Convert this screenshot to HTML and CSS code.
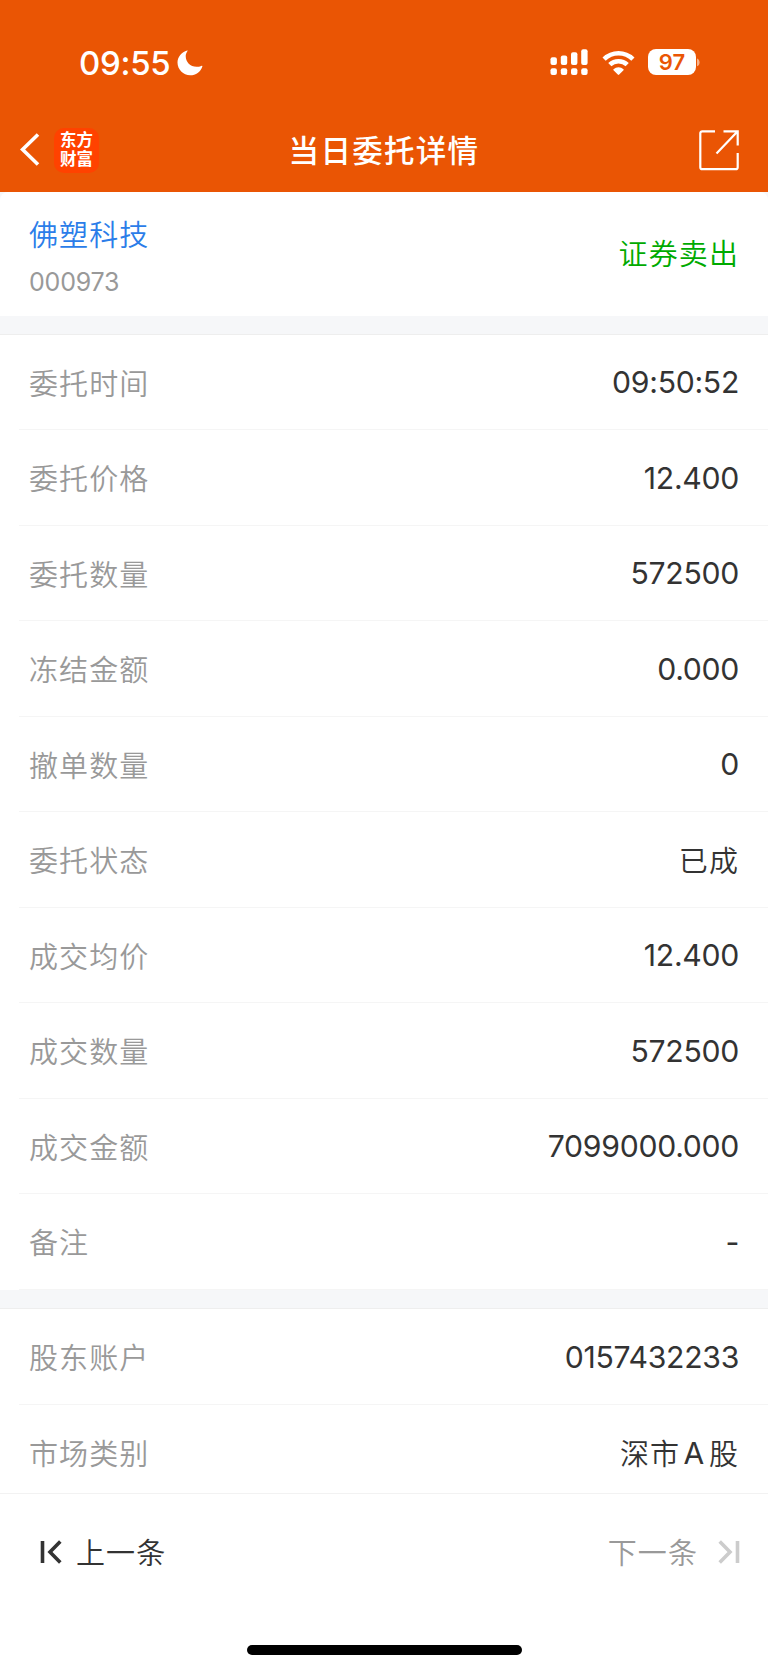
FILE: index.html
```html
<!DOCTYPE html>
<html lang="zh-CN">
<head>
    <meta charset="UTF-8">
    <meta name="viewport" content="width=device-width, initial-scale=1.0">
    <title>当日委托详情</title>
    <link rel="stylesheet" href="styles.css">
</head>

<body>
    <header class="header">
        <div class="status">
            <div class="clock">
                <span class="time">09:55</span>
                <svg class="moon" width="26" height="26" viewBox="0 0 26 26">
                    <path d="M10.2.4C4.600 1.800.5 6.800.5 12.600c0 7 5.700 12.700 12.700 12.700 5.600 0 10.400-3.600 12.100-8.600.3-.8-.3-1.100-1-.8-1.500.6-3 .9-4.700.9C13.200 16.800 8.700 12 8.700 6c0-1.600.8-3.400 1.800-4.900.4-.6.2-.8-.3-.7z" fill="#fff"/>
                </svg>
            </div>
            <div class="signals">
                <svg width="38" height="27" viewBox="0 0 38 27" fill="#fff">
                    <rect x="0.500" y="8.300" width="6.400" height="7.700" rx="2"/>
                    <rect x="10.800" y="6.500" width="6.400" height="9.500" rx="2"/>
                    <rect x="21" y="3.200" width="6.400" height="12.800" rx="2"/>
                    <rect x="31.200" y="0.200" width="6.400" height="15.800" rx="2"/>
                    <rect x="0.500" y="19.300" width="6.400" height="6.800" rx="2"/>
                    <rect x="10.800" y="19.300" width="6.400" height="6.800" rx="2"/>
                    <rect x="21" y="19.300" width="6.400" height="6.800" rx="2"/>
                    <rect x="31.200" y="19.300" width="6.400" height="6.800" rx="2"/>
                </svg>
                <svg class="wifi" width="33" height="26" viewBox="0 0 33 26">
                    <g fill="none" stroke="#fff" stroke-width="4.600">
                        <path d="M2.100 9.100a20.600 20.600 0 0 1 28.800 0"/>
                        <path d="M7.800 14.700a12.600 12.600 0 0 1 17.400 0"/>
                    </g>
                    <path d="M11.500 19.300a7.300 7.300 0 0 1 10 0c.3.300.3.600 0 .9l-4.300 4.300c-.5.500-.9.500-1.400 0l-4.300-4.300c-.3-.3-.3-.6 0-.9z" fill="#fff"/>
                </svg>
                <div class="battery">97</div>
                <svg class="cap" width="3" height="9" viewBox="0 0 3 9">
                    <path d="M0 .5c1.500.6 2.600 2 2.600 3.900S1.500 7.700 0 8.300z" fill="#fff" fill-opacity=".55"/>
                </svg>
            </div>
        </div>
        <div class="nav">
            <div class="nav-left">
                <svg width="20" height="34" viewBox="0 0 20 34">
                    <path d="M18 1.500L2.600 16.500 18 31.500" fill="none" stroke="#fff" stroke-width="3.600"/>
                </svg>
                <div class="logo">东方<br>财富</div>
            </div>
            <h1 class="title">当日委托详情</h1>
            <svg class="share" width="42" height="42" viewBox="0 0 42 42">
                <g fill="none" stroke="#fff" stroke-width="2.200">
                    <path d="M17 2.300H4.300a2 2 0 0 0-2 2v33.900a2 2 0 0 0 2 2h33.400a2 2 0 0 0 2-2V24"/>
                    <path d="M25.500 2.300h14.200v14.200M39.700 2.300L18.500 24.500"/>
                </g>
            </svg>
        </div>
    </header>

    <main class="main">
        <section class="stock">
            <div>
                <div class="stock-name">佛塑科技</div>
                <div class="stock-code">000973</div>
            </div>
            <div class="side">证券卖出</div>
        </section>

        <ul class="list">
            <li><span class="label">委托时间</span><span class="num">09:50:52</span></li>
            <li><span class="label">委托价格</span><span class="num">12.400</span></li>
            <li><span class="label">委托数量</span><span class="num">572500</span></li>
            <li><span class="label">冻结金额</span><span class="num">0.000</span></li>
            <li><span class="label">撤单数量</span><span class="num">0</span></li>
            <li><span class="label">委托状态</span><span class="text">已成</span></li>
            <li><span class="label">成交均价</span><span class="num">12.400</span></li>
            <li><span class="label">成交数量</span><span class="num">572500</span></li>
            <li><span class="label">成交金额</span><span class="num">7099000.000</span></li>
            <li><span class="label">备注</span><span class="num">-</span></li>
        </ul>

        <ul class="list account">
            <li><span class="label">股东账户</span><span class="num">0157432233</span></li>
            <li><span class="label">市场类别</span><span class="text">深市<span class="letter">A</span>股</span></li>
        </ul>
    </main>

    <footer class="footer">
        <div class="pager">
            <div class="prev">
                <svg width="22" height="24" viewBox="0 0 22 24" fill="none" stroke="#333" stroke-width="3.600">
                    <path d="M2.500 1v22M20.300 1.600L10 12l10.300 10.400"/>
                </svg>
                <span>上一条</span>
            </div>
            <div class="next">
                <span>下一条</span>
                <svg width="22" height="24" viewBox="0 0 22 24" fill="none" stroke="#ccc" stroke-width="3.600">
                    <path d="M19.500 1v22M1.700 1.600L12 12 1.700 22.400"/>
                </svg>
            </div>
        </div>
        <div class="home-bar"></div>
    </footer>
</body>
</html>
```
FILE: styles.css
```css
body, ul, li, h1 {
    margin: 0;
    padding: 0;
    list-style: none;
}
body {
    display: flex;
    flex-direction: column;
    height: 1670px;
    overflow: hidden;
    background: #f6f7f9;
    font-family: "Noto Sans CJK SC", sans-serif;
    font-size: 29px;
    font-weight: 350;
    letter-spacing: 1.1px;
    color: #333;
}
svg {
    display: block;
    flex: none;
}

/* 顶部 */
.header {
    flex: none;
    height: 192px;
    background: #ea5504;
    color: #fff;
}
.status {
    display: flex;
    align-items: center;
    justify-content: space-between;
    height: 60px;
    padding: 32px 68px 0 79px;
    font-family: Inter, sans-serif;
    letter-spacing: 0;
}
.clock,
.signals {
    display: flex;
    align-items: center;
}
.time {
    width: 98px;
    padding-top: 1px;
    font-size: 33px;
    font-weight: 500;
    letter-spacing: -0.3px;
}
.moon {
    margin-top: 2px;
}
.wifi {
    margin: 1px 13px 0 14px;
}
.battery {
    width: 48px;
    height: 26px;
    border-radius: 8px;
    background: #fff;
    color: #ea5504;
    font-size: 22px;
    font-weight: 600;
    line-height: 27px;
    text-align: center;
}
.cap {
    margin-left: 1px;
}
.nav {
    display: flex;
    align-items: center;
    justify-content: space-between;
    height: 84px;
    padding: 16px 28px 0 20px;
}
.nav-left {
    display: flex;
    align-items: center;
    width: 79px;
    justify-content: space-between;
}
.logo {
    box-sizing: border-box;
    width: 45px;
    height: 45px;
    padding-top: 3px;
    border-radius: 10px;
    background: #ff4200;
    font-family: "Liberation Sans", "Noto Sans CJK SC", sans-serif;
    font-size: 16.500px;
    font-weight: 700;
    letter-spacing: 0;
    line-height: 19px;
    text-align: center;
}
.title {
    margin-left: -29px;
    padding-bottom: 2px;
    font-size: 30.500px;
    font-weight: 500;
    letter-spacing: 1.3px;
}

/* 股票信息 */
.main {
    flex: none;
    height: 1301px;
    overflow: hidden;
}
.stock {
    display: flex;
    align-items: center;
    justify-content: space-between;
    box-sizing: border-box;
    height: 124px;
    padding: 4px 29px 0;
    border-radius: 8px 8px 0 0;
    background: #fff;
}
.stock-name {
    line-height: 44px;
    color: #2b7de9;
}
.stock-code {
    margin-top: 7px;
    font-family: Inter, sans-serif;
    font-size: 25px;
    font-weight: 400;
    letter-spacing: -0.2px;
    line-height: 40px;
    color: #999;
}
.side {
    padding-bottom: 8px;
    color: #0a0;
}

/* 明细列表 */
.list {
    margin-top: 18.500px;
    background: #fff;
    box-shadow: 0 -1px 0 #eee;
}
.list li {
    display: flex;
    align-items: center;
    justify-content: space-between;
    box-sizing: border-box;
    height: 95.500px;
    margin-left: 19px;
    padding: 0 29px 0 10px;
    border-bottom: 1px solid #f5f5f5;
}
.account {
    margin-top: 19.500px;
}
.label {
    color: #999;
}
.num {
    padding-top: 1px;
    font-family: Inter, sans-serif;
    font-size: 30.200px;
    font-weight: 400;
    letter-spacing: -0.300px;
}
.letter {
    margin: 0 3.500px;
    font-family: Inter, sans-serif;
    font-size: 30px;
    font-weight: 400;
    line-height: 1;
    vertical-align: 1px;
}

/* 底部翻页 */
.footer {
    flex: 1;
    border-top: 1px solid #f2f2f2;
    background: #fff;
}
.pager {
    display: flex;
    align-items: center;
    justify-content: space-between;
    height: 116px;
    padding: 0 28px 0 40px;
}
.pager span {
    padding-bottom: 2px;
}
.prev,
.next {
    display: flex;
    align-items: center;
}
.prev {
    gap: 14px;
}
.next {
    gap: 20px;
    color: #999;
}
.home-bar {
    width: 275px;
    height: 10px;
    margin: 35px auto 0;
    border-radius: 5px;
    background: #000;
}
```
